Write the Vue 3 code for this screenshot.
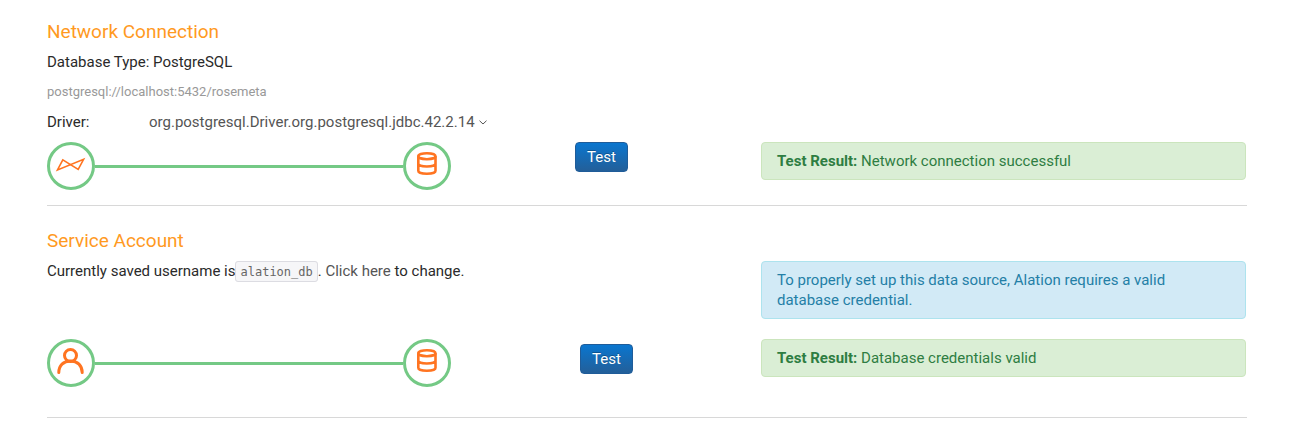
<script setup>
import { ref } from 'vue'

const drivers = ['org.postgresql.Driver.org.postgresql.jdbc.42.2.14']
const driver = ref(drivers[0])
</script>

<template>
  <main class="settings">
    <section class="section network">
      <h2>Network Connection</h2>
      <p>Database Type: PostgreSQL</p>
      <p class="uri">postgresql://localhost:5432/rosemeta</p>
      <div class="driver">
        <label for="driver">Driver:</label>
        <span class="picker">
          <select id="driver" v-model="driver">
            <option v-for="d in drivers" :key="d" :value="d">{{ d }}</option>
          </select>
          <svg class="chevron" viewBox="0 0 8 5" aria-hidden="true"><path d="M0.5 0.7 4 4 7.5 0.7" /></svg>
        </span>
      </div>
      <div class="row">
        <div class="link">
          <span class="node">
            <svg viewBox="0 0 42 42" aria-hidden="true">
              <path class="thin" d="M7.5 24.9 12.8 14.8 28.2 24.4 33.600 14.3Z" />
            </svg>
          </span>
          <span class="wire"></span>
          <span class="node">
            <svg viewBox="0 0 42 42" aria-hidden="true">
              <ellipse cx="20.9" cy="11.2" rx="8.6" ry="3" />
              <path d="M12.3 11.2v14.500c0 1.900 3.600 3.100 8.600 3.100s8.600-1.200 8.600-3.100V11.200M12.300 18.400c0 1.900 3.600 3.100 8.600 3.100s8.600-1.200 8.600-3.100" />
            </svg>
          </span>
        </div>
        <div><button type="button">Test</button></div>
        <div class="alert success"><strong>Test Result:</strong> Network connection successful</div>
      </div>
    </section>

    <section class="section account">
      <h2>Service Account</h2>
      <div class="row">
        <p class="wide">Currently saved username is<code>alation_db</code>. <a href="#">Click here</a> to change.</p>
        <div class="alert info">To properly set up this data source, Alation requires a valid database credential.</div>
        <div class="link">
          <span class="node">
            <svg viewBox="0 0 42 42" aria-hidden="true">
              <circle class="round" cx="20.5" cy="13.500" r="6" />
              <path class="round" d="M8.800 30.600C8.800 23.500 13.500 19 20.500 19S32.200 23.500 32.200 30.600" />
            </svg>
          </span>
          <span class="wire"></span>
          <span class="node">
            <svg viewBox="0 0 42 42" aria-hidden="true">
              <ellipse cx="20.9" cy="11.2" rx="8.6" ry="3" />
              <path d="M12.3 11.2v14.500c0 1.900 3.600 3.100 8.600 3.100s8.600-1.200 8.600-3.100V11.200M12.300 18.400c0 1.900 3.600 3.100 8.600 3.100s8.600-1.200 8.600-3.100" />
            </svg>
          </span>
        </div>
        <div class="inset"><button type="button">Test</button></div>
        <div class="alert success"><strong>Test Result:</strong> Database credentials valid</div>
      </div>
    </section>
  </main>
</template>

<style>
body {
  margin: 0;
  background: #fff;
}
</style>

<style scoped>
.settings {
  padding: 0 67px 0 47px;
  font: 15px/20px Roboto, "Liberation Sans", sans-serif;
  color: #2a2a2a;
}
.section {
  border-bottom: 1px solid #d8d8d8;
}
.network {
  padding: 22px 0 15px;
}
.account {
  padding: 25px 0 30px;
}
h2 {
  margin: 0 0 10px;
  font-size: 19px;
  line-height: 20px;
  font-weight: 400;
  color: #ff9a1f;
}
p {
  margin: 0;
}
.uri {
  margin: 10px 0;
  font-size: 13px;
  color: #999;
}
.driver {
  display: flex;
  margin-bottom: 10px;
}
.driver label {
  width: 102px;
}
.picker {
  display: flex;
  align-items: center;
  gap: 4px;
}
select {
  appearance: none;
  height: 20px;
  margin: 0;
  padding: 0;
  border: 0;
  background: none;
  font: inherit;
  color: #555;
}
.chevron {
  width: 8px;
  height: 5px;
  fill: none;
  stroke: #555;
}
.row {
  display: grid;
  grid-template-columns: 528fr 186fr 485fr;
  align-items: start;
  row-gap: 20px;
  margin-right: 1px;
}
.wide {
  grid-column: span 2;
}
.link {
  display: flex;
  align-items: center;
  width: 404px;
}
.node {
  box-sizing: border-box;
  width: 48px;
  height: 48px;
  border: 3px solid #74c985;
  border-radius: 50%;
}
.node svg {
  display: block;
  width: 42px;
  height: 42px;
  fill: none;
  stroke: #ff7421;
  stroke-width: 2.600;
}
.node .thin {
  stroke-width: 1.600;
}
.node .round {
  stroke-width: 3;
  stroke-linecap: round;
}
.wire {
  flex: 1;
  height: 3px;
  background: #74c985;
}
button {
  display: block;
  height: 30px;
  padding: 0 11px;
  border: 1px solid #1f5c99;
  border-radius: 4px;
  background: linear-gradient(#0a76cf, #235f99);
  font: inherit;
  color: #fff;
  text-shadow: 0 -1px 0 rgba(0, 0, 0, 0.25);
}
.inset {
  padding: 5px;
}
.alert {
  padding: 8px 15px;
  border: 1px solid;
  border-radius: 4px;
}
.alert strong {
  font-weight: 700;
}
.success {
  background: #daeed5;
  border-color: #cbe5bd;
  color: #2e7d42;
}
.info {
  background: #d2eaf6;
  border-color: #ade3ee;
  color: #247fa6;
}
code {
  padding: 3px 4px 2px;
  border: 1px solid #dcdce2;
  border-radius: 3px;
  background: #f6f6f8;
  font: 12px "DejaVu Sans Mono", monospace;
  color: #666;
}
a {
  color: #555;
  text-decoration: none;
}
</style>
